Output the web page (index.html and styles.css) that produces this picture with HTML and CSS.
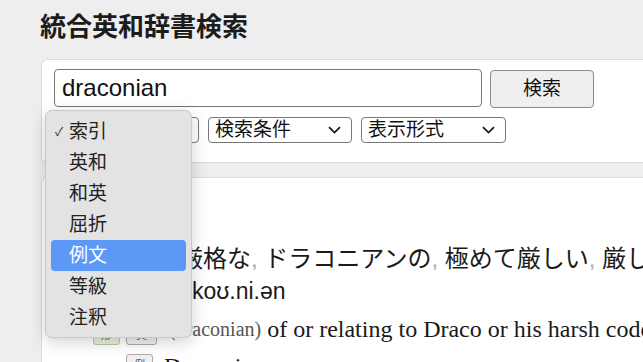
FILE: index.html
```html
<!DOCTYPE html>
<html lang="ja">
<head>
<meta charset="utf-8">
<title>統合英和辞書検索</title>
<link rel="stylesheet" href="styles.css">
</head>
<body>
<div class="page">
  <h1 class="title">統合英和辞書検索</h1>
  <form class="panel search">
    <div class="row">
      <div class="input">draconian</div>
      <div class="btn">検索</div>
    </div>
    <div class="row selects">
      <div class="sel">索引<svg class="chev" width="13" height="8" viewBox="0 0 13 8"><path d="M1 1.2 L6.5 6.6 L12 1.2" fill="none" stroke="#1a1a1a" stroke-width="1.8"/></svg></div>
      <div class="sel">検索条件<svg class="chev" width="13" height="8" viewBox="0 0 13 8"><path d="M1 1.2 L6.5 6.6 L12 1.2" fill="none" stroke="#1a1a1a" stroke-width="1.8"/></svg></div>
      <div class="sel">表示形式<svg class="chev" width="13" height="8" viewBox="0 0 13 8"><path d="M1 1.2 L6.5 6.6 L12 1.2" fill="none" stroke="#1a1a1a" stroke-width="1.8"/></svg></div>
    </div>
  </form>
  <div class="panel result">
    <div class="line ja">厳格な<span class="comma">,</span> ドラコニアンの<span class="comma">,</span> 極めて厳しい<span class="comma">,</span> 厳しい</div>
    <div class="line pron">drəˈkoʊ.ni.ən</div>
    <div class="line def"><span class="tag green">形</span><span class="tag">英</span><span class="small">(draconian)</span>&nbsp;of or relating to Draco or his harsh code</div>
    <div class="line ex"><span class="tag">例</span>Draconian measures</div>
  </div>
  <div class="menu">
    <div class="item"><span class="check">✓</span>索引</div>
    <div class="item">英和</div>
    <div class="item">和英</div>
    <div class="item">屈折</div>
    <div class="item active">例文</div>
    <div class="item">等級</div>
    <div class="item">注釈</div>
  </div>
</div>
</body>
</html>
```
FILE: styles.css
```css
* { box-sizing: border-box; }
html, body { margin: 0; padding: 0; }
body {
  background: #eeeeee;
  font-family: "Liberation Sans", "Noto Sans CJK JP", sans-serif;
  color: #1a1a1a;
  width: 643px;
  height: 362px;
  overflow: hidden;
}
.page {
  position: relative;
  padding-left: 41px;
}
.title {
  margin: 0 0 0 -1px;
  padding-top: 8px;
  font-family: "Noto Sans CJK JP", sans-serif;
  font-size: 26px;
  line-height: 34px;
  font-weight: bold;
  color: #1c1c1c;
  height: 59px;
}
.panel {
  background: #fff;
  border: 1px solid #dcdcdc;
  border-right: none;
  border-radius: 6px 0 0 6px;
}
.search {
  margin: 0;
  height: 104px;
  padding: 9px 0 0 12px;
}
.row {
  display: flex;
  gap: 8px;
  align-items: flex-start;
}
.input {
  width: 428px;
  height: 38px;
  border: 1px solid #767676;
  border-radius: 4px;
  font-size: 24px;
  line-height: 36px;
  padding-left: 7px;
  color: #111;
}
.btn {
  margin-top: 1px;
  width: 104px;
  height: 38px;
  border: 1px solid #8a8a8a;
  border-radius: 4px;
  background: #efefef;
  font-size: 19px;
  line-height: 36px;
  text-align: center;
  color: #111;
}
.selects {
  margin-top: 9px;
  gap: 9px;
}
.sel {
  width: 145px;
  height: 26px;
  border: 1px solid #777;
  border-radius: 4px;
  font-size: 19px;
  line-height: 24px;
  padding: 0 10px 0 6px;
  display: flex;
  justify-content: space-between;
  align-items: center;
  color: #111;
}
.sel:nth-child(2) { width: 144px; }
.result {
  margin-top: 14px;
  height: 200px;
  padding-top: 66px;
}
.line {
  white-space: nowrap;
}
.ja {
  font-size: 24px;
  line-height: 30px;
  padding-left: 137px;
}
.comma { color: #aaa; }
.pron {
  font-size: 23px;
  line-height: 34px;
  padding-left: 109px;
}
.def {
  font-family: "Liberation Serif", "Noto Sans CJK JP", serif;
  font-size: 24px;
  line-height: 42px;
  padding-left: 51px;
  display: flex;
  align-items: center;
}
.def .tag { margin-top: 10px; }
.tag {
  display: inline-block;
  flex: none;
  width: 28px;
  height: 21px;
  border: 1px solid #aaa;
  border-radius: 3px;
  background: #f0f0f0;
  font-family: "Noto Sans CJK JP", sans-serif;
  font-size: 11px;
  line-height: 19px;
  text-align: center;
  color: #555;
  margin-right: 6px;
}
.tag.green { background: #e4f0d8; border-color: #b8c8a8; width: 27px; }
.tag + .tag { width: 31px; margin-right: 12px; }
.small {
  font-size: 20px;
  color: #555;
}
.ex {
  font-family: "Liberation Serif", "Noto Sans CJK JP", serif;
  font-size: 24px;
  line-height: 28px;
  padding-left: 84px;
  padding-top: 2px;
  display: flex;
  align-items: flex-start;
}
.ex .tag { margin-right: 11px; width: 27px; margin-top: 2px; }
.menu {
  position: absolute;
  left: 45px;
  top: 110px;
  width: 147px;
  height: 228px;
  background: #e3e3e3;
  border: 1px solid #c9c9c9;
  border-radius: 7px;
  box-shadow: 0 4px 16px rgba(0,0,0,0.18);
  padding: 5px 5px;
}
.item {
  position: relative;
  height: 31px;
  line-height: 31px;
  font-size: 19px;
  padding-left: 18px;
  color: #222;
  border-radius: 4px;
}
.item.active {
  background: #5c98f6;
  color: #fff;
}
.check {
  position: absolute;
  left: 4px;
  top: 1px;
  font-size: 12px;
  color: #333;
}
```
